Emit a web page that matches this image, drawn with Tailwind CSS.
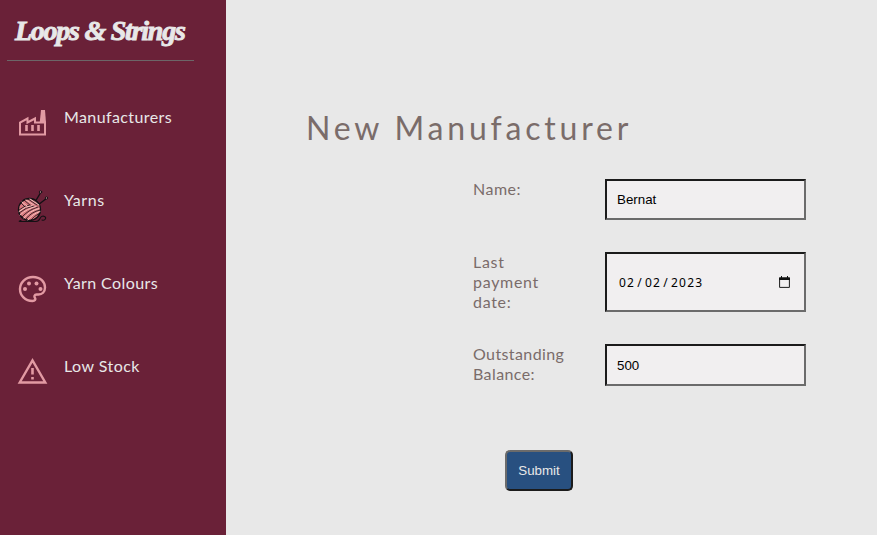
<!DOCTYPE html>
<html lang="en">
<head>
<meta charset="utf-8">
<title>Loops &amp; Strings</title>
<script src="https://cdn.jsdelivr.net/npm/@tailwindcss/browser@4"></script>
</head>
<body class="flex h-[535px] w-[877px] overflow-hidden bg-[#e8e8e8] font-[Lato,sans-serif] text-base leading-5 text-[#7a6c6a]">
<aside class="h-full w-[226px] shrink-0 bg-[#6a2138] text-[#e8e8e8]">
  <div class="ml-[7px] h-[61px] w-[187px] border-b border-[#6c6668] pt-[11px] pl-2">
    <span class="inline-block whitespace-nowrap font-['Liberation_Serif',serif] text-[28px] leading-10 font-bold italic tracking-[-1.25px] [-webkit-text-stroke:0.9px_#e8e8e8]">Loops &amp; Strings</span>
  </div>
  <nav class="flex flex-col pt-[46px] pl-[17px]">
    <a class="flex h-[83px] gap-4">
      <svg class="h-[31px] w-[31px] shrink-0" viewBox="0 0 31 31" fill="none" stroke="#e29aa3" stroke-width="2"><path d="M3 27.500V15.500L10.500 11.500V15.500L18 11.500V15.500H28V27.500Z"/><path d="M22.700 16L24 3H28L29 16Z" fill="#e29aa3" stroke="none"/><path d="M9.500 18V24M15.500 18V24M21.500 18V24" stroke-width="2.6"/></svg>
      <span class="tracking-[0.4px]">Manufacturers</span>
    </a>
    <a class="flex h-[83px] gap-4">
      <svg class="h-[33px] w-[31px] shrink-0" viewBox="0 0 31 33" fill="none" stroke="#141014" stroke-width="1" stroke-linecap="round"><path d="M18 12L24 2M21 15L30 8" stroke-width="1.4"/><circle cx="23.500" cy="2" r="1.200" fill="#b98b91"/><circle cx="29.500" cy="8" r="1.200" fill="#b98b91"/><circle cx="12.500" cy="19.500" r="11" fill="#d9787e" stroke-width="1.300"/><g stroke-width=".8"><path d="M4 13L8 17M7 10L14 16M11 9L20 15M15 9L23 16M2 20Q8 15 13 15M2 23Q9 17 17 16M5 27Q11 20 21 17M9 29Q14 22 23 20M14 30Q17 26 23 23"/></g><path d="M5 12L10 16M9 10L17 15M13 9L22 15M2 21.500Q8 16 15 15.500M3 25Q10 18.500 19 16.500M7 28Q12 21 22 18.500M11 30Q15 24 23 21.500" stroke="#f4c0bb" stroke-width="1"/><path d="M4 30.500Q0 31.500 5 31.500H19C24 31.500 22 26 26 26C31 27 28 31 25 30" stroke-width="1.100"/></svg>
      <span class="tracking-[0.6px]">Yarns</span>
    </a>
    <a class="flex h-[83px] gap-4">
      <svg class="h-[31px] w-[31px] shrink-0" viewBox="0 0 31 31" fill="none" stroke="#e29aa3" stroke-width="2.4"><path d="M15.500 28C8 28 3 22.500 3 16S8.500 4 16 4S28 9 28 14.500C28 19 25 21.500 21.500 21.500H19.500C17.500 21.500 16.800 23.500 18 25C19 26.500 18 28 15.500 28Z"/><g fill="#e29aa3" stroke="none"><circle cx="8" cy="16" r="2"/><circle cx="12" cy="10.500" r="2"/><circle cx="19.500" cy="10.500" r="2"/><circle cx="23.500" cy="16" r="2"/></g></svg>
      <span class="tracking-[0.42px]">Yarn Colours</span>
    </a>
    <a class="flex h-[83px] gap-4">
      <svg class="h-[31px] w-[31px] shrink-0" viewBox="0 0 31 31" fill="none" stroke="#e29aa3" stroke-width="2.4"><path d="M2.700 26.500L15.500 4.500L28.300 26.500Z"/><path d="M15.500 12V18.500M15.500 21V23.500" stroke-width="2.600"/></svg>
      <span class="tracking-[0.45px]">Low Stock</span>
    </a>
  </nav>
</aside>
<main class="flex-1 pt-[108px] pl-20">
  <h1 class="whitespace-nowrap text-[32px] leading-10 tracking-[3.8px]">New Manufacturer</h1>
  <form class="pt-[31px] pl-[167px]">
    <label class="mb-8 flex h-[41px] items-start"><span class="w-[132px] tracking-[0.5px]">Name:</span>
      <input type="text" value="Bernat" class="h-[41px] w-[201px] border-2 border-t-[#1b1b1b] border-r-[#6b6b6b] border-b-[#6b6b6b] border-l-[#1b1b1b] bg-[#f1eff0] px-2.5 font-['Liberation_Sans',sans-serif] text-[13.333px] text-black"></label>
    <label class="mb-8 flex h-[60px] items-start"><span class="w-[132px] tracking-[0.7px]">Last<br>payment<br>date:</span>
      <span class="flex h-[60px] w-[201px] items-center justify-between border-2 border-t-[#1b1b1b] border-r-[#6b6b6b] border-b-[#6b6b6b] border-l-[#1b1b1b] bg-[#f1eff0] pr-[14px] pl-3 text-black"><span class="pt-0.5 font-['Noto_Sans',sans-serif] text-[12px] tracking-[1.25px] whitespace-nowrap">02<span class="mx-[2px]">/</span>02<span class="mx-[2px]">/</span>2023</span>
        <svg class="h-3 w-[11px]" viewBox="0 0 11 12" fill="none" stroke="#1b1b1b"><path d="M.6 2H10.400V11.400H.6Z"/><path d="M0 1.500H11V4H0ZM2 0H3V2H2ZM8 0H9V2H8Z" fill="#111" stroke="none"/></svg></span></label>
    <label class="flex h-[42px] items-start"><span class="w-[132px] tracking-[0.4px]">Outstanding<br>Balance:</span>
      <input type="text" value="500" class="h-[42px] w-[201px] border-2 border-t-[#1b1b1b] border-r-[#6b6b6b] border-b-[#6b6b6b] border-l-[#1b1b1b] bg-[#f1eff0] px-2.5 font-['Liberation_Sans',sans-serif] text-[13.333px] text-black"></label>
    <button type="button" class="mt-16 ml-8 block h-[41px] w-[68px] rounded-[5px] border-2 border-t-[#6b6b6b] border-r-[#1b1b1b] border-b-[#1b1b1b] border-l-[#6b6b6b] bg-[#285080] font-['Liberation_Sans',sans-serif] text-[13.333px] text-[#e8e8e8]">Submit</button>
  </form>
</main>
</body>
</html>
